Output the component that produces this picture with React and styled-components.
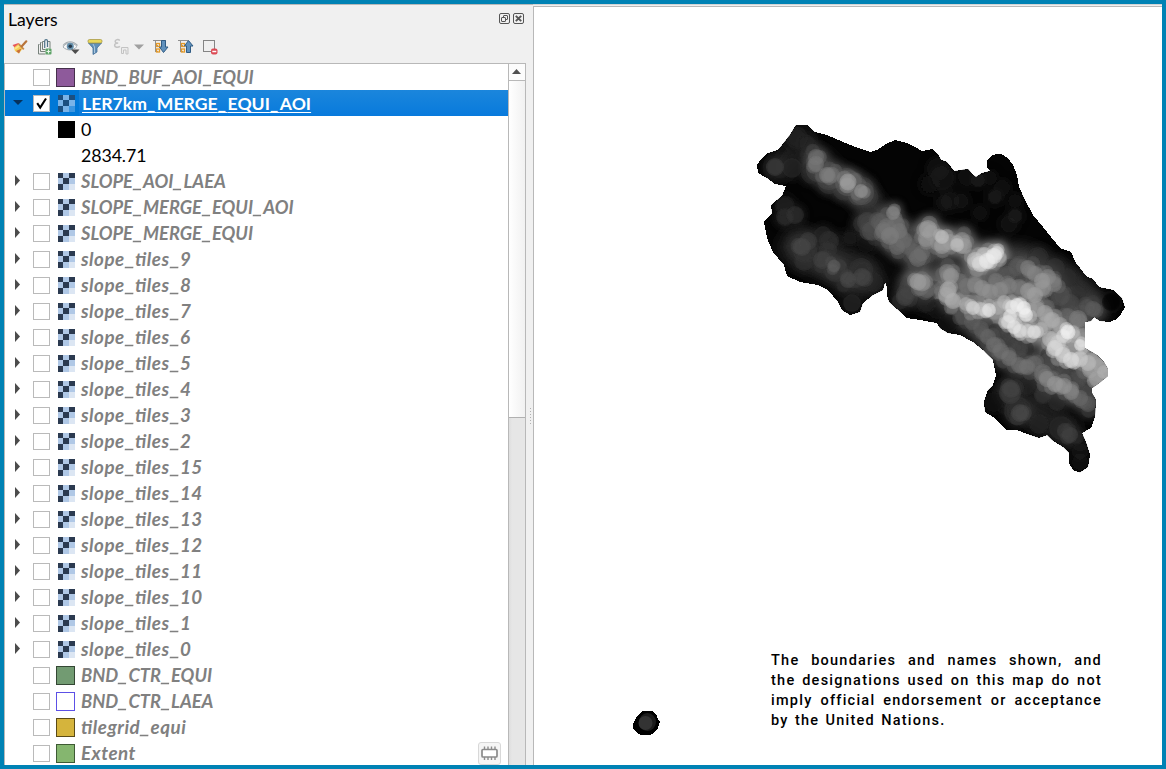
import React from "react";
import styled, { createGlobalStyle } from "styled-components";

const Global = createGlobalStyle`
  * { box-sizing: border-box; }
  body { margin: 0; background: #0082b4; overflow: hidden; }
`;

const Frame = styled.div`
  width: 1166px;
  height: 769px;
  border: 4px solid #0082b4;
  background: #f0f0f0;
  display: flex;
  font-family: Lato, "Liberation Sans", sans-serif;
  overflow: hidden;
`;

const Panel = styled.section`
  width: 522px;
  display: flex;
  flex-direction: column;
  border-top: 1px solid #b8b8b8;
`;

const TitleBar = styled.header`
  height: 30px;
  display: flex;
  align-items: center;
  justify-content: space-between;
  padding: 0 2px 0 4px;
`;

const Title = styled.h1`
  margin: 0;
  font-size: 17.6px;
  font-weight: 400;
  line-height: 30px;
  color: #000;
`;

const TitleButtons = styled.div`
  display: flex;
  gap: 3px;
  margin-top: -3px;
`;

const Toolbar = styled.div`
  height: 28px;
  display: flex;
  align-items: center;
  padding: 0 0 4px 7px;
`;

const Tool = styled.span`
  width: ${(p) => p.$w || 25}px;
  height: 18px;
  display: flex;
  flex: none;
`;

const TreeFrame = styled.div`
  flex: 1;
  min-height: 0;
  display: flex;
  border: 1px solid #b8b8b8;
  border-bottom: 0;
  background: #fff;
`;

const Tree = styled.ul`
  flex: 1;
  margin: 0;
  padding: 0;
  list-style: none;
  overflow: hidden;
`;

const Row = styled.li`
  height: 26px;
  display: flex;
  align-items: center;
  background: ${(p) => (p.$selected ? "#0078d7" : "transparent")};
`;

const Expander = styled.span`
  display: flex;
  width: 28px;
  height: 26px;
  padding: 7px 0 0 8px;
  flex: none;
`;

const Check = styled.span`
  width: 17px;
  height: 17px;
  flex: none;
  border: 1px solid #bababa;
  background: #fff;
  margin-top: 1px;
  display: flex;
`;

const IconSlot = styled.span`
  width: 29px;
  height: 26px;
  flex: none;
  display: flex;
  align-items: center;
  padding-left: ${(p) => (p.$raster ? 8 : 6)}px;
`;

const Swatch = styled.span`
  width: 19px;
  height: 19px;
  margin-top: 1px;
  border: 1px solid ${(p) => p.$line};
  background: ${(p) => p.$fill};
`;

const Ramp = styled.span`
  width: 17px;
  height: 17px;
  background: ${(p) => p.$fill};
`;

const Label = styled.span`
  flex: 1;
  height: 26px;
  line-height: ${(p) => (p.$lower ? 26 : 27)}px;
  padding-left: ${(p) => (p.$selected ? 3 : 2)}px;
  font-size: ${(p) => (p.$lower ? 18.8 : p.$selected ? 17.6 : 18.3)}px;
  font-weight: 700;
  font-style: ${(p) => (p.$selected ? "normal" : "italic")};
  font-feature-settings: "liga" 1;
  letter-spacing: ${(p) => (p.$lower ? 0.5 : 0)}px;
  color: ${(p) => (p.$selected ? "#fff" : "#808080")};
  text-decoration: ${(p) => (p.$selected ? "underline" : "none")};
  text-decoration-thickness: 1px;
  text-underline-offset: 2px;
  background: ${(p) => (p.$selected ? "linear-gradient(#1b86dc, #087adc)" : "none")};
  white-space: nowrap;
`;

const Underscore = styled.span`
  display: ${(p) => (p.$inline ? "inline" : "inline-block")};
  letter-spacing: ${(p) => (p.$inline ? "1.7px" : "0")};
  transform: scaleX(1.25);
  margin: 0 ${(p) => (p.$inline ? 0 : 1)}px;
`;

const LegendText = styled.span`
  font-size: 17.8px;
  line-height: 26px;
  letter-spacing: -0.1px;
  padding: 0 0 0 2px;
  color: #000;
`;

const LegendIndent = styled.span`
  width: 45px;
  flex: none;
`;

const MemoryBadge = styled.span`
  width: 23px;
  height: 23px;
  margin-right: 7px;
  border: 1px solid #d8d8d8;
  border-radius: 3px;
  background: #f5f5f5;
`;

const ScrollBar = styled.div`
  width: 17px;
  border-left: 1px solid #b8b8b8;
  display: flex;
  flex-direction: column;
  background: linear-gradient(90deg, #dedede, #e6e6e6 20%, #e6e6e6);
`;

const ScrollButton = styled.div`
  height: 17px;
  border-bottom: 1px solid #b8b8b8;
  background: #fcfcfc;
`;

const ScrollThumb = styled.div`
  height: 337px;
  border-bottom: 1px solid #b0b0b0;
  background: linear-gradient(90deg, #fff, #f1f1f1);
`;

const Splitter = styled.div`
  width: 7px;
  border-top: 1px solid #b8b8b8;
  display: flex;
  flex-direction: column;
  align-items: flex-end;
  gap: 2px;
  padding: 403px 2px 0 0;
`;

const Grip = styled.i`
  width: 1px;
  height: 1px;
  background: #b0b0b0;
`;

const MapColumn = styled.main`
  flex: 1;
  display: flex;
  border-top: 1px solid #d4d4d4;
  padding-top: 1px;
`;

const MapCanvas = styled.div`
  flex: 1;
  border-left: 1px solid #b8b8b8;
  border-top: 1px solid #b8b8b8;
  background: #fff;
  display: grid;
`;

const Raster = styled.svg`
  grid-area: 1 / 1;
  width: 628px;
  height: 758px;
  display: block;
`;

const Disclaimer = styled.div`
  grid-area: 1 / 1;
  align-self: end;
  width: 331px;
  margin: 0 0 34px 237px;
  font-family: Roboto, sans-serif;
  font-size: 14.5px;
  font-weight: 500;
  line-height: 20px;
  letter-spacing: 1.25px;
  color: #000;
`;

const Line = styled.div`
  display: flex;
  justify-content: ${(p) => (p.$last ? "flex-start" : "space-between")};
  gap: ${(p) => (p.$last ? 6.2 : 0)}px;
`;

const RasterIcon = ({ selected }) => {
  const d = selected ? "#1b4f80" : "#2b3a50";
  const l = selected ? "#79b3e8" : "#b0c8e6";
  const f = selected ? "#3d96e0" : "#dce6f3";
  const cells = [d, l, d, l, d, l, d, l, f];
  const pos = [0, 5, 11];
  const size = [5, 6, 6];
  return (
    <svg width="17" height="17" shapeRendering="crispEdges">
      {cells.map((c, i) => (
        <rect key={i} x={pos[i % 3]} y={pos[Math.floor(i / 3)]} width={size[i % 3]} height={size[Math.floor(i / 3)]} fill={c} />
      ))}
    </svg>
  );
};

const Arrow = ({ open }) => (
  <svg width="12" height="12">
    {open ? <path d="M0 3h10L5 8z" fill="#06325c" /> : <path d="M2 0v11l5-5.500z" fill="#4c4c4c" />}
  </svg>
);

const layers = [
  { name: "BND_BUF_AOI_EQUI", fill: "#8e5a9b", line: "#46304c" },
  { name: "LER7km_MERGE_EQUI_AOI", raster: true, selected: true },
  { legend: "0", fill: "#000" },
  { legend: "2834.71", fill: "#fff" },
  ...["SLOPE_AOI_LAEA", "SLOPE_MERGE_EQUI_AOI", "SLOPE_MERGE_EQUI"].map((name) => ({ name, raster: true })),
  ...[9, 8, 7, 6, 5, 4, 3, 2, 15, 14, 13, 12, 11, 10, 1, 0].map((n) => ({ name: "slope_tiles_" + n, raster: true, lower: true })),
  { name: "BND_CTR_EQUI", fill: "#729b72", line: "#344734" },
  { name: "BND_CTR_LAEA", fill: "#fff", line: "#5c50e6" },
  { name: "tilegrid_equi", fill: "#d5b43c", line: "#5a4a16", lower: true },
  { name: "Extent", fill: "#85b66f", line: "#3e5a34", memory: true, lower: true },
];

const LayerName = ({ name, selected }) =>
  name.split("_").map((part, i) => (
    <React.Fragment key={i}>
      {i > 0 && <Underscore $inline={selected}>_</Underscore>}
      {part}
    </React.Fragment>
  ));

const LayerRow = ({ layer }) => {
  if (layer.legend) {
    return (
      <Row>
        <LegendIndent />
        <IconSlot $raster><Ramp $fill={layer.fill} /></IconSlot>
        <LegendText>{layer.legend}</LegendText>
      </Row>
    );
  }
  return (
    <Row $selected={layer.selected}>
      <Expander>{layer.raster && <Arrow open={layer.selected} />}</Expander>
      <Check>
        {layer.selected && (
          <svg width="15" height="15"><path d="M3.200 7.200l3 4.300L12 2.500" fill="none" stroke="#000" strokeWidth="2.100" /></svg>
        )}
      </Check>
      <IconSlot $raster={layer.raster}>
        {layer.raster ? <RasterIcon selected={layer.selected} /> : <Swatch $fill={layer.fill} $line={layer.line} />}
      </IconSlot>
      <Label $selected={layer.selected} $lower={layer.lower}>
        <LayerName name={layer.name} selected={layer.selected} />
      </Label>
      {layer.memory && (
        <MemoryBadge>
          <svg width="21" height="21" fill="none">
            <path d="M5.500 3.500v3M9 3.500v3M12.500 3.500v3M16 3.500v3M5.500 14v3M9 14v3M12.500 14v3M16 14v3" stroke="#8c8c8c" strokeWidth="1.400" />
            <rect x="3" y="6.500" width="15" height="7.500" rx="1" stroke="#8a8a8a" strokeWidth="1.700" fill="#fff" />
          </svg>
        </MemoryBadge>
      )}
    </Row>
  );
};

const Tools = () => (
  <Toolbar>
    <Tool>
      <svg width="18" height="18">
        <path d="M1.500 7l6-2 1.500 2-5 3z" fill="#e8575a" />
        <path d="M3 9.500L8 5.500l4 4.500-4 5.500-4-2.500z" fill="#f6cf55" />
        <path d="M3.500 10l4.500-3 1.200 1.200-4.700 3.300z" fill="#fbe58d" />
        <path d="M5 13l5.500-2.500L8 15.500z" fill="#c8703c" />
        <path d="M7.800 6.200l5 5.200" stroke="#c98a4a" strokeWidth="1.800" />
        <path d="M10.800 8.200L15.300 3.300" stroke="#b8743a" strokeWidth="2.200" strokeLinecap="round" />
      </svg>
    </Tool>
    <Tool>
      <svg width="18" height="18" fill="none">
        <path d="M3.500 6.500h-1v9.500h7M5.500 4.500h-1v9h5M11 3.500h3v7M9 3.500H6.500v8h3" stroke="#77817b" />
        <path d="M8.700 10V3a1.400 1.400 0 012.800 0v6" stroke="#4f7389" strokeWidth="1.200" />
        <rect x="9.500" y="10.500" width="6" height="6" rx="1" fill="#5da267" />
        <path d="M12.500 11.500v4M10.500 13.500h4" stroke="#e9f5e9" strokeWidth="1.200" />
      </svg>
    </Tool>
    <Tool>
      <svg width="20" height="18">
        <path d="M2 9C5 4 12 3.500 16 8.500 12 13 6 13 2 9z" fill="#f7f7f7" stroke="#a3abb0" strokeWidth="1" />
        <path d="M2 7.500C6 2.500 12 2.500 16.500 7.500" fill="none" stroke="#a3abb0" strokeWidth="1.200" />
        <circle cx="9.300" cy="8.300" r="3.500" fill="#6590ad" />
        <circle cx="9.300" cy="8.300" r="1.800" fill="#263746" />
        <path d="M10 11.500h8.500l-4.200 4.500z" fill="#4d4d4d" />
      </svg>
    </Tool>
    <Tool $w={26}>
      <svg width="18" height="18">
        <path d="M2.500 5L7 10v6.500l4-2.500v-4L15.500 5z" fill="#6290b8" stroke="#436f98" strokeWidth=".8" />
        <rect x="2" y="1.500" width="14" height="3.500" rx="1.500" fill="#e9d85b" stroke="#a99b48" strokeWidth=".8" />
        <path d="M7 6l1.500 3v6" stroke="#a9c6de" fill="none" />
      </svg>
    </Tool>
    <Tool $w={20}>
      <svg width="18" height="18" fill="none" stroke="#c3c3c3">
        <path d="M7.800 2.500C6.200 1 3 1.500 3.200 3.500c.1 1.300 1.500 1.600 3 1.600-2 0-3.700.5-3.600 2.300.1 2 3.400 2.500 5.400.9" strokeWidth="1.500" />
        <path d="M9.500 15.500V9.500h6.500v6.500h-2v-4h-2.500v3.500z" fill="#ececec" />
      </svg>
    </Tool>
    <Tool $w={20}>
      <svg width="18" height="18"><path d="M2 6.500h10L7 11.500z" fill="#a0a0a0" /></svg>
    </Tool>
    <Tool $w={25}>
      <svg width="18" height="18" fill="none">
        <path d="M1 2.500h13M3.500 3v11M3.500 7.500H6M3.500 13.500H6" stroke="#8f8f8f" />
        <rect x="4.500" y="5.500" width="3" height="3" stroke="#e59a28" strokeWidth="1.300" />
        <rect x="4.500" y="11" width="3" height="3" stroke="#e59a28" strokeWidth="1.300" />
        <path d="M9.500 2.500h4v6.500h2.500L11.500 14.500 7.500 9h2z" fill="#6091bd" stroke="#315c84" />
      </svg>
    </Tool>
    <Tool $w={25}>
      <svg width="18" height="18" fill="none">
        <path d="M1 2.500h10M3.500 3v11M3.500 7.500H6M3.500 13.500H6" stroke="#8f8f8f" />
        <rect x="4.500" y="5.500" width="3" height="3" stroke="#e59a28" strokeWidth="1.300" />
        <rect x="4.500" y="11" width="3" height="3" stroke="#e59a28" strokeWidth="1.300" />
        <path d="M9.500 14.500h4V8h2.500L11.500 2.500 7.500 8h2z" fill="#6091bd" stroke="#315c84" />
      </svg>
    </Tool>
    <Tool>
      <svg width="18" height="18" fill="none">
        <rect x="1.500" y="2.500" width="11" height="11" stroke="#858585" />
        <rect x="9" y="10.500" width="6.500" height="6" rx="2" fill="#dc4b55" />
        <path d="M10.300 13.500h4" stroke="#fff" strokeWidth="1.500" />
      </svg>
    </Tool>
  </Toolbar>
);

const outline =
  "796,125 807,125 815,132 827,135 843,142 858,148 870,152 877,150 886,144 895,140 907,143 915,147 922,151 932,149 938,154 941,160 947,162 951,167 954,171 968,169 973,175 976,177 982,173 990,171 987,167 987,161 992,155 1000,153.500 1008,158 1013,165 1017,175 1019,187 1025,200 1033,215 1043,227 1060,248 1071,252 1076,263 1087,277 1093,279 1099,287 1113,290 1122,298 1125,307 1121,314 1117,319 1110,322 1100,321 1094,317 1091,321 1085,322 1085,348 1097,355 1104,362 1108,369 1108,376 1098,384 1092,388 1092,393 1096,400 1095,417 1091,428 1082,433 1087,445 1090,455 1088,467 1080,472.500 1073,470 1069,463 1069,453 1063,447 1052,440 1047,435 1039,438 1030,435 1017,430 1006,430 995,418 985,412 984,402 988,390 993,385 996,375 993,360 983,350 973,342 960,335 948,333 940,328 937,323 920,320 907,318 897,309 889,302 887,295 887,287 885,282 883,290 873,295 863,303 860,312 850,315 842,310 838,302 828,290 818,285 800,282 787,276 784,265 773,252 767,238 764,222 772,213 771,205 782,196 786,186 775,184 767,178 758,173 757,165 762,158 768,153 778,150 790,135";

// Relief classes as [x, y, radius, grey]
const base = [
  [775,167,9,64],[792,168,10,42],[797,138,11,36],[807,144,9,38],[816,157,8,112],[816,164,8,124],[818,170,12,70],
  [827,175,8,130],[832,175,8,120],[829,177,13,75],[848,182,8.5,168],[848,183,13,95],[861,191,7,150],[862,193,12,88],
  [893,213,7,138],[887,227,9,116],[880,222,9,95],[890,236,9,128],[884,231,9,118],[896,225,9,112],[867,222,10,72],[872,231,10,82],
  [897,247,8,110],[903,240,9,108],[918,258,9,112],[914,252,9,96],[922,253,8,110],[908,246,9,98],[899,231,8,120],
  [785,206,10,36],[785,217,9,48],[795,215,9,52],[802,247,9,74],[808,241,9,62],[805,251,12,54],[822,260,9,68],[828,250,9,52],
  [834,266,6.5,98],[836,270,12,56],[804,261,10,50],[848,280,8,76],[862,277,9,72],[861,270,12,52],[873,282,10,40],[852,303,9,42],[850,238,8,28],[866,244,9,24],[823,235,9,42],[829,241,10,48],
  [928,229,9,162],[931,233,8,148],[926,239,8,150],[942,237,7,196],[938,243,8,146],[950,242,8,158],[957,245,7,196],[962,240,8,150],[964,246,8,158],[942,246,8,160],
  [975,260,8,200],[980,264,8,224],[987,261,8,238],[994,256,8,240],[997,253,7,224],[984,255,8,200],
  [918,282,8.5,160],[922,283,8.5,148],[927,289,9,104],[905,297,9,72],[910,288,11,64],[947,272,8,134],[951,276,8,154],[948,290,8.5,174],[946,295,8,160],[953,301,8,178],
  [959,281,8,110],[967,286,8,120],[975,285,8,137],[982,288,8,148],[990,292,8,146],[1000,290,8,142],[996,281,8,122],[1009,286,8,130],[1019,287,8,126],[1007,275,9,90],[1017,267,9,92],
  [1028,268,8,132],[1035,274,8,136],[1042,281,8,154],[1048,277,8,138],[1054,284,8,132],[1043,288,8,148],[1035,295,8,162],[1028,291,8,154],
  [966,304,7,175],[973,308,7,218],[981,309,7,200],[989,310,7,236],[998,308,7,176],[1004,302,7,182],[1012,307,7,232],[1017,305,7,240],[1024,308,7,244],[1026,315,7,244],[1010,316,7,230],[1008,322,7,224],[1014,327,7,232],[1020,331,7,224],[1028,331,7,208],[1034,332,7,230],[1041,329,7,178],
  [1037,309,8,158],[1045,313,8,168],[1052,320,8,176],[1046,324,8,164],[1060,325,8,170],[1068,332,7.5,250],[1063,336,7,220],[1074,336,7,178],[1080,345,6,240],[1083,337,9,156],[1058,343,8,204],[1050,339,8,190],[1055,348,8,222],[1063,355,8,218],[1071,360,8,226],[1080,359,8,206],[1088,363,8,190],[1096,359,8,154],[1101,366,8,166],[1104,372,7,180],[1097,379,8,168],[1090,370,8,160],[1078,319,9,130],[1068,317,9,105],
  [1060,296,10,82],[1070,304,10,76],[1078,295,9,52],[1067,278,10,46],[1055,268,10,52],[1038,258,11,48],[1087,307,8,84],[1093,309,8,96],[1111,302,9,10],
  [963,317,8,86],[972,322,8,96],[981,329,8,94],[988,337,8,104],[994,345,8,114],[1001,351,8,114],[1009,358,8,118],[1019,365,8,112],[1027,367,8,118],[1034,364,8,106],[1043,373,9,114],[1047,379,8,140],[1055,384,8,154],[1064,386,8,150],[1071,392,8,138],[1080,398,8,106],[1088,404,8,94],[1000,335,8,68],[1019,349,9,72],[1010,342,8,68],[1048,362,9,76],[1065,370,9,74],[1078,379,9,80],[1087,392,9,72],
  [1010,393,11,64],[1011,389,9,68],[1020,413,9,76],[1018,411,14,48],[1039,424,10,40],[1043,395,9,54],[1057,402,9,46],[1027,386,10,36],[994,402,10,24],[1065,431,8,62],[1070,435,8,66],[1061,428,12,42],[1080,452,8,26],[1080,462,8,18],[1080,443,8,26],
  [942,178,12,26],[938,169,11,20],[978,180,7,32],[967,177,9,20],[950,201,9,26],[944,203,8,24],[961,201,7,26],[995,197,7,30],[1002,188,8,24],[1015,216,7,32],[1009,224,8,26],[980,213,7,20],[1015,201,7,16],[930,184,10,14],[990,178,7,18],
  [948,323,10,22],[937,309,10,24],[926,303,10,36],
];

// Neighbouring windows overlap each peak at a slightly lower value
const halo = base
  .filter((d) => d[3] >= 66)
  .flatMap(([x, y, r, g], i) =>
    [0, 1, 2].map((k) => {
      const a = i * 2.4 + k * 2.1;
      const dist = 3.5 + k * 1.6;
      return [x + Math.cos(a) * dist, y + Math.sin(a) * dist, r * 0.92, g * (0.86 - k * 0.12)];
    })
  );

const discs = [...base, ...halo].sort((a, b) => a[3] - b[3]);

const glows = [
  ["816,160 830,175 848,185 862,194", 22, "#3a3a3a"],
  ["862,196 878,217 895,240 920,257", 24, "#343434"],
  ["884,224 905,242 925,250", 22, "#505050"],
  ["924,233 942,240 962,244 985,262 998,253", 22, "#606060"],
  ["915,284 950,285 990,285 1035,280 1056,286", 30, "#5c5c5c"],
  ["950,296 995,305 1035,320 1075,350 1100,372", 30, "#8c8c8c"],
  ["975,322 1008,350 1040,366 1088,395", 24, "#505050"],
  ["800,247 835,264 864,277", 38, "#2a2a2a"],
  ["780,168 800,140", 24, "#1c1c1c"],
  ["1010,395 1038,415 1066,430", 26, "#202020"],
  ["1020,262 1065,285 1090,308", 34, "#3c3c3c"],
];

const ReliefMap = () => (
  <Raster viewBox="534 7 628 758" role="img">
    <defs>
      <clipPath id="land"><polygon points={outline} /></clipPath>
      <filter id="haze" x="-30%" y="-30%" width="160%" height="160%"><feGaussianBlur stdDeviation="7" /></filter>
      <filter id="edge" x="-5%" y="-5%" width="110%" height="110%"><feGaussianBlur stdDeviation="3" /></filter>
      <filter id="soft" x="-5%" y="-5%" width="110%" height="110%"><feGaussianBlur stdDeviation="0.500" /></filter>
    </defs>
    <polygon points={outline} fill="#040404" shapeRendering="crispEdges" />
    <g clipPath="url(#land)">
      <g filter="url(#haze)" fill="none" strokeLinecap="round" strokeLinejoin="round">
        {glows.map(([pts, w, c]) => <polyline key={pts} points={pts} stroke={c} strokeWidth={w} />)}
      </g>
      <g filter="url(#edge)" opacity="0.6">
        {discs.map(([x, y, r, g], i) => <circle key={i} cx={x} cy={y} r={r + 3} fill={`rgb(${g * 0.7},${g * 0.7},${g * 0.7})`} />)}
      </g>
      <g filter="url(#soft)">
        {discs.map(([x, y, r, g], i) => (
          <g key={i} fill={`rgb(${g},${g},${g})`}>
            <circle cx={x} cy={y} r={r} opacity="0.48" />
            <circle cx={x} cy={y} r={r * 0.84} opacity="0.26" />
          </g>
        ))}
      </g>
    </g>
    <polygon points="643,711 652,711 654,713 657,715 658,720 660,722 658,728 654,733 650,735 641,735 636,732 633,729 633,724 637,716" fill="#000" shapeRendering="crispEdges" />
    <ellipse cx="647.500" cy="722" rx="8.500" ry="9" fill="#1c1c1c" />
    <circle cx="645.500" cy="723" r="7" fill="#333" />
  </Raster>
);

const notice = [
  "The boundaries and names shown, and",
  "the designations used on this map do not",
  "imply official endorsement or acceptance",
  "by the United Nations.",
];

export default function App() {
  return (
    <Frame>
      <Global />
      <Panel>
        <TitleBar>
          <Title>Layers</Title>
          <TitleButtons>
            <svg width="11" height="11" fill="none" stroke="#555">
              <rect x=".5" y=".5" width="10" height="10" rx="1.500" />
              <rect x="4.500" y="2.500" width="4" height="4" rx=".5" />
              <rect x="2.500" y="4.500" width="4" height="4" rx=".5" fill="#f0f0f0" />
            </svg>
            <svg width="11" height="11" fill="none" stroke="#555">
              <rect x=".5" y=".5" width="10" height="10" rx="1.500" />
              <path d="M2.800 2.800l5.400 5.400M8.200 2.800L2.800 8.200" strokeWidth="1.900" />
            </svg>
          </TitleButtons>
        </TitleBar>
        <Tools />
        <TreeFrame>
          <Tree>{layers.map((l, i) => <LayerRow key={i} layer={l} />)}</Tree>
          <ScrollBar>
            <ScrollButton>
              <svg width="16" height="16"><path d="M3 10h9L7.500 5z" fill="#505050" /></svg>
            </ScrollButton>
            <ScrollThumb />
          </ScrollBar>
        </TreeFrame>
      </Panel>
      <Splitter>{[0, 1, 2, 3, 4, 5].map((i) => <Grip key={i} />)}</Splitter>
      <MapColumn>
        <MapCanvas>
          <ReliefMap />
          <Disclaimer>
            {notice.map((text, i) => (
              <Line key={i} $last={i === 3}>{text.split(" ").map((w, j) => <span key={j}>{w}</span>)}</Line>
            ))}
          </Disclaimer>
        </MapCanvas>
      </MapColumn>
    </Frame>
  );
}
